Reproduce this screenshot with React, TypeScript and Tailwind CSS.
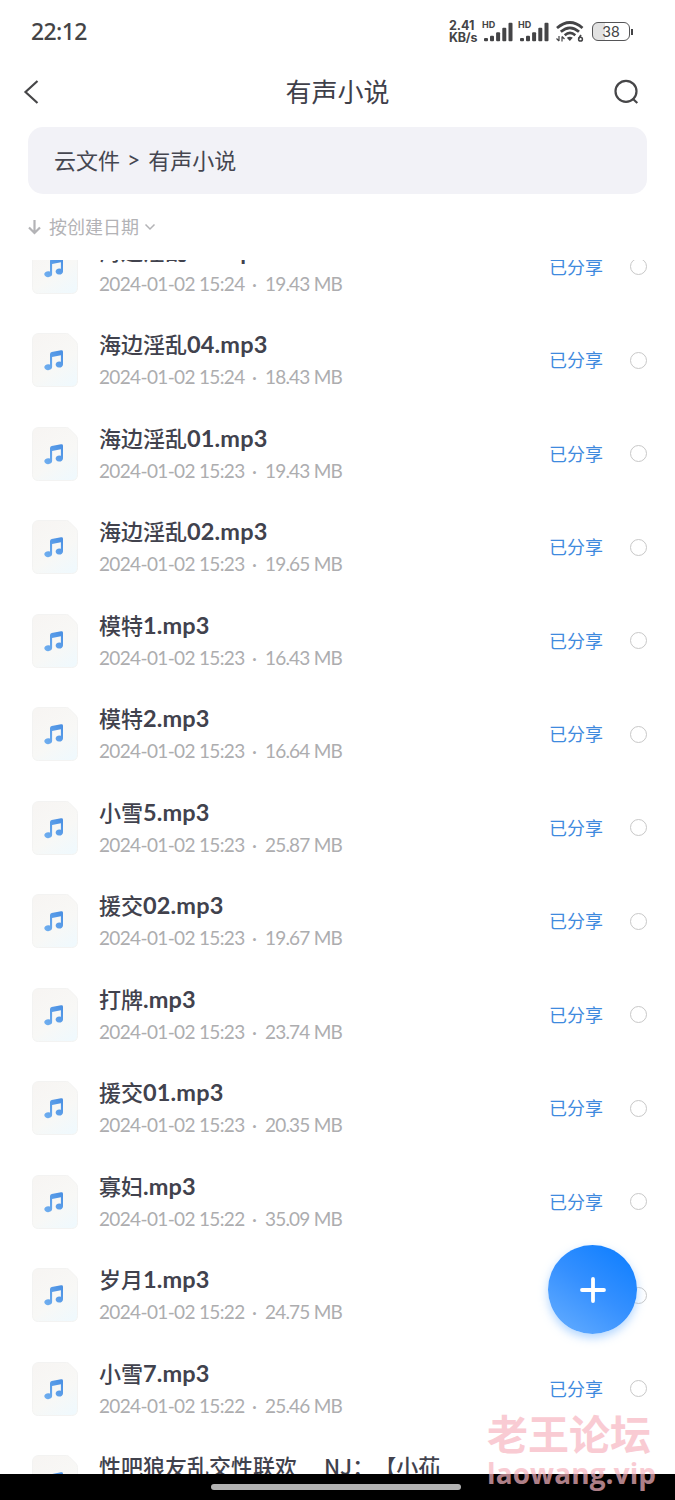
type FileItem = { name: string; cjk?: string; date: string; size: string; shared?: boolean };

const files: FileItem[] = [
  { cjk: "海边淫乱", name: "03.mp3", date: "2024-01-02 15:24", size: "19.43 MB" },
  { cjk: "海边淫乱", name: "04.mp3", date: "2024-01-02 15:24", size: "18.43 MB" },
  { cjk: "海边淫乱", name: "01.mp3", date: "2024-01-02 15:23", size: "19.43 MB" },
  { cjk: "海边淫乱", name: "02.mp3", date: "2024-01-02 15:23", size: "19.65 MB" },
  { cjk: "模特", name: "1.mp3", date: "2024-01-02 15:23", size: "16.43 MB" },
  { cjk: "模特", name: "2.mp3", date: "2024-01-02 15:23", size: "16.64 MB" },
  { cjk: "小雪", name: "5.mp3", date: "2024-01-02 15:23", size: "25.87 MB" },
  { cjk: "援交", name: "02.mp3", date: "2024-01-02 15:23", size: "19.67 MB" },
  { cjk: "打牌", name: ".mp3", date: "2024-01-02 15:23", size: "23.74 MB" },
  { cjk: "援交", name: "01.mp3", date: "2024-01-02 15:23", size: "20.35 MB" },
  { cjk: "寡妇", name: ".mp3", date: "2024-01-02 15:22", size: "35.09 MB" },
  { cjk: "岁月", name: "1.mp3", date: "2024-01-02 15:22", size: "24.75 MB" },
  { cjk: "小雪", name: "7.mp3", date: "2024-01-02 15:22", size: "25.46 MB" },
  { cjk: "性吧狼友乱交性联欢　 NJ：【小苮", name: "", date: "2024-01-02 15:22", size: "25.46 MB" },
];

function MusicFileIcon() {
  return (
    <svg width="46" height="54" viewBox="0 0 46 54" className="shrink-0">
      <defs>
        <linearGradient id="paper" x1="0.2" y1="0" x2="0.8" y2="1">
          <stop offset="0" stopColor="#f7f5f3" />
          <stop offset="0.6" stopColor="#f8f8f6" />
          <stop offset="1" stopColor="#f0f9fd" />
        </linearGradient>
        <linearGradient id="note" x1="0" y1="1" x2="1" y2="0">
          <stop offset="0" stopColor="#72b0f0" />
          <stop offset="1" stopColor="#488ee2" />
        </linearGradient>
      </defs>
      <path
        d="M7 .5H34.500Q36 .5 37 1.500L44 8.500Q45.500 10 45.500 12.500V47.500Q45.500 53.500 39.500 53.500H6.500Q.5 53.500 .5 47.500V7Q.5 .5 7 .5Z"
        fill="url(#paper)"
        stroke="#f3f3f2"
        strokeWidth="1"
      />
      <path
        d="M18 21.200Q18 19.500 19.700 19.100L29 17.300Q31 17 31 18.700V31.300A3.700 3 0 1 1 28.900 28.800V22.300L20.100 24V34A3.900 3 0 1 1 18 31.500Z"
        fill="url(#note)"
      />
    </svg>
  );
}

function FileRow({ file }: { file: FileItem }) {
  return (
    <li className="flex h-[93.5px] shrink-0 items-center pr-7 pl-8">
      <MusicFileIcon />
      <div className="ml-[21px] flex min-w-0 flex-1 flex-col whitespace-nowrap">
        <div className="-mt-px h-[33px] text-[22px] leading-8 font-medium text-[#41424d] [text-spacing-trim:space-all]">
          <span>{file.cjk}</span>
          <span className="font-['Lato'] text-[23.500px] font-bold tracking-[0.15px]">{file.name}</span>
        </div>
        <div className="flex h-8 pt-px font-['Lato'] text-[19px] leading-8 text-[#adadaf]">
          <span className="w-[149px] tracking-[-0.65px]">{file.date}</span>
          <span className="w-[17px] pl-[4px]">·</span>
          <span className="tracking-[-0.8px]">{file.size}</span>
        </div>
      </div>
      <span className="-mt-[2px] w-[54px] text-[18px] leading-8 text-[#3f8ade]">已分享</span>
      <span className="ml-[27px] size-[17px] rounded-full border-[1.5px] border-[#c8c8c8]" />
    </li>
  );
}

function Signal() {
  return (
    <div className="relative h-[20px] w-[30px]">
      <span className="absolute -top-[2px] -left-px font-['Inter'] text-[9px] leading-[10px] font-bold">HD</span>
      <svg width="30" height="20" viewBox="0 0 30 20" fill="currentColor">
        <rect x="1" y="16" width="4" height="3.300" rx="1" />
        <rect x="7" y="13.700" width="4" height="5.600" rx="1" />
        <rect x="13.100" y="10.300" width="4" height="9" rx="1" />
        <rect x="19.300" y="5.700" width="4" height="13.600" rx="1" />
        <rect x="25.500" y="0.700" width="4" height="18.600" rx="1" />
      </svg>
    </div>
  );
}

function Wifi() {
  return (
    <svg width="28" height="22" viewBox="0 0 28 22" fill="none" stroke="currentColor">
      <path d="M1 7Q14 -4 26.500 7" strokeWidth="2.800" />
      <path d="M4.800 10.800Q14 3 23 10.800" strokeWidth="2.800" />
      <path d="M8.700 14.200Q14 9.700 19.300 14.200" strokeWidth="2.600" />
      <path d="M13.800 20L10.800 16.800Q13.800 14.500 16.800 16.800Z" fill="currentColor" stroke="none" />
      <path d="M3 15V20M3 20L.5 17.500M6 20.500V15.500M6 15.500L8.500 18" strokeWidth="1.200" />
      <path d="M25 14L22.800 17.300" strokeWidth="1.700" />
      <circle cx="24.500" cy="18.200" r="1.900" strokeWidth="1.500" />
    </svg>
  );
}

function StatusBar() {
  return (
    <div className="flex h-[62px] items-center pt-px pr-[42px] pl-[31px] text-[#444446]">
      <span className="flex-1 font-['Noto_Sans'] text-[23px] font-medium tracking-[-0.6px]">22:12</span>
      <div className="mr-[4px] w-[30px] font-['Inter'] text-[12.500px] leading-[12px] font-bold whitespace-nowrap">
        <div>2.41</div>
        <div className="tracking-[-0.2px]">KB/s</div>
      </div>
      <div className="flex items-center gap-[6px]">
        <Signal />
        <Signal />
      </div>
      <div className="ml-[7px]">
        <Wifi />
      </div>
      <div className="ml-[8px] flex h-[19px] w-[38px] items-center justify-center rounded-[6px] border-[1.5px] border-[#555557] bg-[linear-gradient(90deg,#e2e2e2_33%,white_33%)] font-['Lato'] text-[15px] leading-none">
        38
      </div>
      <span className="ml-px h-[6px] w-[2px] bg-[#444446]" />
    </div>
  );
}

export default function App() {
  return (
    <main className="relative flex h-[1500px] w-[675px] flex-col overflow-hidden bg-white font-['Noto_Sans_CJK_SC',sans-serif]">
      <header className="flex h-[260px] shrink-0 flex-col">
        <StatusBar />
        <div className="flex h-[60px] items-center justify-between pr-[36px] pl-[23px] text-[#464648]">
          <svg width="26" height="26" viewBox="0 0 26 26" fill="none" stroke="currentColor" strokeWidth="2.200">
            <path d="M14.500 2L2.500 13L14.500 24" />
          </svg>
          <h1 className="-mt-[2px] ml-[13px] text-[26px] leading-9 text-[#3f404a]">有声小说</h1>
          <svg width="26" height="26" viewBox="0 0 26 26" fill="none" stroke="currentColor" strokeWidth="2.200">
            <circle cx="13" cy="12.300" r="10.500" />
            <path d="M19.500 19.500L24.300 24" />
          </svg>
        </div>
        <nav className="mx-7 mt-[5px] flex h-[67px] items-center rounded-[15px] bg-[#f2f2f7] px-[26px] pb-[2px] text-[22px] text-[#454650]">
          <span>云文件</span>
          <span className="mr-[8px] ml-[7px] font-['Lato'] text-[23px]">&gt;</span>
          <span>有声小说</span>
        </nav>
        <div className="flex h-[66px] items-center pl-[28px] text-[18px] text-[#b3b3b6]">
          <svg width="13" height="16" viewBox="0 0 13 16" fill="none" stroke="currentColor" strokeWidth="2.200">
            <path d="M6.500 1V14M1 8.500L6.500 14L12 8.500" />
          </svg>
          <span className="-mt-[2px] ml-[8px]">按创建日期</span>
          <svg width="12" height="8" viewBox="0 0 12 8" className="ml-[5px]" fill="none" stroke="currentColor" strokeWidth="1.500">
            <path d="M1.500 1.500L6 6L10.500 1.500" />
          </svg>
        </div>
      </header>

      <section className="h-[1214px] shrink-0 overflow-hidden">
        <ul className="-mt-[40.250px] flex flex-col">
          {files.map((file, index) => (
            <FileRow key={index} file={file} />
          ))}
        </ul>
      </section>

      <footer className="flex h-[26px] items-center justify-center bg-black">
        <span className="-ml-[3px] h-[6px] w-[250px] rounded-full bg-[#b2b2b2]" />
      </footer>

      <button
        aria-label="新建"
        className="absolute top-[1245px] left-[548px] flex size-[89px] items-center justify-center rounded-full bg-[linear-gradient(35deg,#63acff_5%,#3590ff_50%,#1682ff_85%)] shadow-[0_4px_10px_#8fc3ffb0]"
      >
        <svg width="26" height="26" viewBox="0 0 26 26" stroke="white" strokeWidth="3.800" strokeLinecap="round">
          <path d="M13 2V24M2 13H24" />
        </svg>
      </button>

      <div className="pointer-events-none absolute top-[1405px] left-[487px] w-[180px] font-bold whitespace-nowrap text-[#f7b6c1] opacity-70">
        <div className="text-[41px] leading-[54px]">老王论坛</div>
        <div className="-mt-[4px] font-['Open_Sans'] text-[28px] leading-[36px] tracking-[0.1px]">laowang.vip</div>
      </div>
    </main>
  );
}
